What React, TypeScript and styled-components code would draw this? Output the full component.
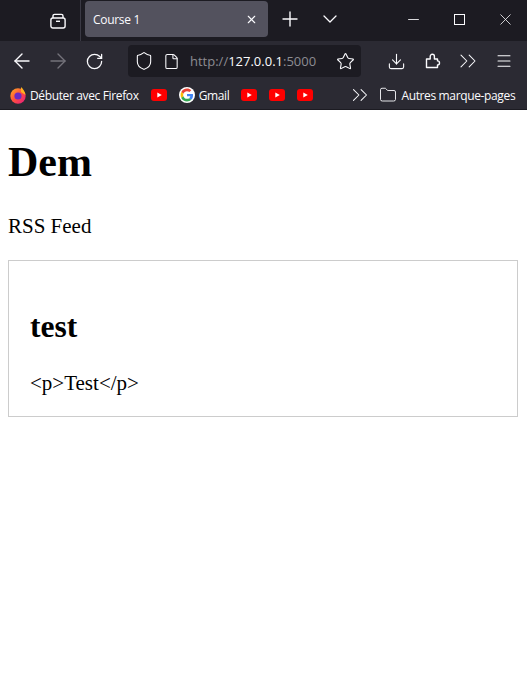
import React from "react";
import styled, { createGlobalStyle } from "styled-components";
import { ArrowLeft, ArrowRight, RotateCw, Shield, File, Star, Download, ChevronsRight, Menu, Plus, ChevronDown, X, Minus, Folder } from "lucide-react";

const GlobalStyle = createGlobalStyle`
  html, body { margin: 0; padding: 0; background: #fff; }
  body { font-family: "Liberation Serif", "Times New Roman", serif; }
`;

const Page = styled.div`
  width: 527px;
  height: 692px;
  overflow: hidden;
  display: flex;
  flex-direction: column;
`;

const TabStrip = styled.div`
  height: 41px;
  background: #1c1b22;
  display: flex;
  align-items: center;
  color: #fbfbfe;
`;

const TabView = styled.div`
  width: 81px;
  height: 41px;
  box-sizing: border-box;
  border-right: 1px solid #3a3944;
  display: flex;
  align-items: center;
  padding-left: 50px;
`;

const Tab = styled.div`
  width: 183px;
  height: 36px;
  margin-left: 4px;
  margin-top: -3px;
  border-radius: 4px;
  background: #53525e;
  display: flex;
  align-items: center;
  justify-content: space-between;
  padding: 0 10px 0 8px;
  box-sizing: border-box;
  font: 12px "Open Sans", "Liberation Sans", sans-serif;
  letter-spacing: -0.3px;
`;

const StripButton = styled.div<{ $w: number; $ml?: number }>`
  width: ${(p) => p.$w}px;
  margin-left: ${(p) => p.$ml ?? 0}px;
  display: flex;
  justify-content: center;
  align-items: center;
  height: 36px;
  margin-top: -3px;
`;

const MaximizeBox = styled.div`
  width: 9px;
  height: 9px;
  border: 1px solid #fbfbfe;
`;

const Toolbar = styled.div`
  height: 40px;
  background: #2b2a33;
  display: flex;
  align-items: center;
  color: #fbfbfe;
  padding-left: 4px;
`;

const NavButton = styled.div<{ $w: number; $dim?: boolean }>`
  width: ${(p) => p.$w}px;
  display: flex;
  justify-content: center;
  color: ${(p) => (p.$dim ? "#74737b" : "#fbfbfe")};
`;

const UrlBar = styled.div`
  width: 233px;
  height: 32px;
  margin-left: 16px;
  margin-right: 17px;
  border-radius: 4px;
  background: #1c1b22;
  display: flex;
  align-items: center;
  padding: 0 6px 0 6px;
  box-sizing: border-box;
`;

const PageIcon = styled(File)`
  margin-left: 9px;
`;

const Url = styled.span`
  margin-left: 10px;
  flex: 1;
  font: 13px "Open Sans", "Liberation Sans", sans-serif;
  color: #8c8c92;
  white-space: nowrap;
  b { font-weight: 400; color: #fbfbfe; }
`;

const Bookmarks = styled.div`
  height: 29px;
  box-sizing: border-box;
  background: #2b2a33;
  border-bottom: 1px solid #1c1b22;
  display: flex;
  align-items: center;
  padding-left: 10px;
  color: #fbfbfe;
  font: 12px "Open Sans", "Liberation Sans", sans-serif;
  letter-spacing: -0.36px;
  white-space: nowrap;
`;

const Mark = styled.div<{ $ml?: number }>`
  display: flex;
  align-items: center;
  gap: 4px;
  margin-left: ${(p) => p.$ml ?? 0}px;
`;

const Content = styled.main`
  flex: 1;
  padding: 0 9px 0 8px;
  color: #000;
  font-size: 21px;
`;

const Title = styled.h1`
  font-size: 42px;
  line-height: 48px;
  margin: 28px 0 0;
  font-weight: 700;
`;

const Subtitle = styled.p`
  font-size: 21px;
  line-height: 24px;
  margin: 28px 0 22px;
`;

const Card = styled.article`
  border: 1px solid #ccc;
  padding: 0 21px 21px;
  height: 157px;
  box-sizing: border-box;
`;

const CardTitle = styled.h2`
  font-size: 31.5px;
  line-height: 36px;
  margin: 48px 0 0;
  font-weight: 700;
`;

const CardBody = styled.p`
  font-size: 21px;
  line-height: 24px;
  margin: 26px 0 0;
`;

const GoogleBadge = styled.svg`
  background: #fff;
  border-radius: 8px;
`;

const YouTube = ({ ml }: { ml?: number }) => (
  <Mark $ml={ml}>
    <svg width="16" height="12" viewBox="0 0 16 12">
      <rect width="16" height="12" rx="3" fill="#f00" />
      <path d="M6.3 3.5 10.8 6 6.3 8.5z" fill="#fff" />
    </svg>
  </Mark>
);

const FirefoxLogo = () => (
  <svg width="16" height="18" viewBox="0 0 16 18">
    <defs>
      <linearGradient id="ff" x1="0" y1="0" x2="1" y2="1">
        <stop offset="0" stopColor="#ffb01f" />
        <stop offset="0.5" stopColor="#ff4f3e" />
        <stop offset="1" stopColor="#e31587" />
      </linearGradient>
    </defs>
    <circle cx="8" cy="10" r="7.7" fill="url(#ff)" />
    <path d="M11 1c2 2 4 4.500 4.500 8L11 6z" fill="#ffb01f" />
    <circle cx="8" cy="10" r="3.6" fill="#6a2bc4" />
  </svg>
);

const GoogleLogo = () => (
  <GoogleBadge width="16" height="16" viewBox="-6 -6 60 60">
    <path fill="#EA4335" d="M24 9.500c3.500 0 6.700 1.200 9.200 3.600l6.900-6.900C35.900 2.400 30.500 0 24 0 14.600 0 6.500 5.400 2.600 13.200l8 6.200C12.400 13.600 17.700 9.500 24 9.500z" />
    <path fill="#4285F4" d="M46.500 24.500c0-1.600-.1-3.100-.4-4.500H24v9h12.600c-.5 2.900-2.200 5.400-4.700 7l7.700 6c4.500-4.200 6.900-10.300 6.900-17.500z" />
    <path fill="#FBBC05" d="M10.500 28.600c-.5-1.400-.8-3-.8-4.600s.3-3.200.8-4.600l-8-6.200C.9 16.400 0 20.100 0 24s.9 7.600 2.600 10.800l7.900-6.200z" />
    <path fill="#34A853" d="M24 48c6.500 0 11.900-2.100 15.900-5.800l-7.700-6c-2.200 1.400-4.900 2.300-8.200 2.300-6.300 0-11.600-4.200-13.500-9.900l-8 6.200C6.500 42.600 14.600 48 24 48z" />
  </GoogleBadge>
);

const TabsIcon = () => (
  <svg width="16" height="16" viewBox="0 0 16 16" fill="none" stroke="currentColor" strokeWidth="1.4">
    <path d="M3 5V3a1.600 1.600 0 0 1 1.600-1.600h6.800A1.600 1.600 0 0 1 13 3v2" />
    <rect x="0.9" y="5" width="14.200" height="10" rx="2" />
    <path d="M6 8.300h4" />
  </svg>
);

const ExtensionIcon = () => (
  <svg width="16" height="16" viewBox="0 0 16 16" fill="none" stroke="currentColor" strokeWidth="1.4" strokeLinejoin="round">
    <path d="M1.500 14.500V6H5.200V3.400a2.100 2.100 0 0 1 4.200 0V6h3.100v1.900a2 2 0 0 1 0 4v2.600z" />
  </svg>
);

const App: React.FC = () => {
  return (
    <Page>
      <GlobalStyle />
      <TabStrip>
        <TabView>
          <TabsIcon />
        </TabView>
        <Tab>
          Course 1
          <X size={13} strokeWidth={2} />
        </Tab>
        <StripButton $w={44}>
          <Plus size={24} strokeWidth={1.4} />
        </StripButton>
        <StripButton $w={36}>
          <ChevronDown size={24} strokeWidth={1.3} />
        </StripButton>
        <StripButton $w={20} $ml={55}>
          <Minus size={17} strokeWidth={1.2} />
        </StripButton>
        <StripButton $w={20} $ml={26}>
          <MaximizeBox />
        </StripButton>
        <StripButton $w={20} $ml={26}>
          <X size={19} strokeWidth={1} />
        </StripButton>
      </TabStrip>

      <Toolbar>
        <NavButton $w={36}>
          <ArrowLeft size={24} strokeWidth={1.4} />
        </NavButton>
        <NavButton $w={36} $dim>
          <ArrowRight size={24} strokeWidth={1.4} />
        </NavButton>
        <NavButton $w={36}>
          <RotateCw size={19} strokeWidth={1.6} />
        </NavButton>
        <UrlBar>
          <Shield size={20} strokeWidth={1.3} />
          <PageIcon size={17} strokeWidth={1.5} />
          <Url>
            http://<b>127.0.0.1</b>:5000
          </Url>
          <Star size={19} strokeWidth={1.4} />
        </UrlBar>
        <NavButton $w={36}>
          <Download size={19} strokeWidth={1.4} />
        </NavButton>
        <NavButton $w={38}>
          <ExtensionIcon />
        </NavButton>
        <NavButton $w={32}>
          <ChevronsRight size={28} strokeWidth={0.9} />
        </NavButton>
        <NavButton $w={40}>
          <Menu size={18} strokeWidth={1.4} />
        </NavButton>
      </Toolbar>

      <Bookmarks>
        <Mark>
          <FirefoxLogo />
          Débuter avec Firefox
        </Mark>
        <YouTube ml={12} />
        <Mark $ml={12}>
          <GoogleLogo />
          Gmail
        </Mark>
        <YouTube ml={12} />
        <YouTube ml={12} />
        <YouTube ml={12} />
        <Mark $ml={34}>
          <ChevronsRight size={26} strokeWidth={0.95} />
        </Mark>
        <Mark $ml={6}>
          <Folder size={18} strokeWidth={1.2} />
          Autres marque-pages
        </Mark>
      </Bookmarks>

      <Content>
        <Title>Dem</Title>
        <Subtitle>RSS Feed</Subtitle>
        <Card>
          <CardTitle>test</CardTitle>
          <CardBody>&lt;p&gt;Test&lt;/p&gt;</CardBody>
        </Card>
      </Content>
    </Page>
  );
};

export default App;
